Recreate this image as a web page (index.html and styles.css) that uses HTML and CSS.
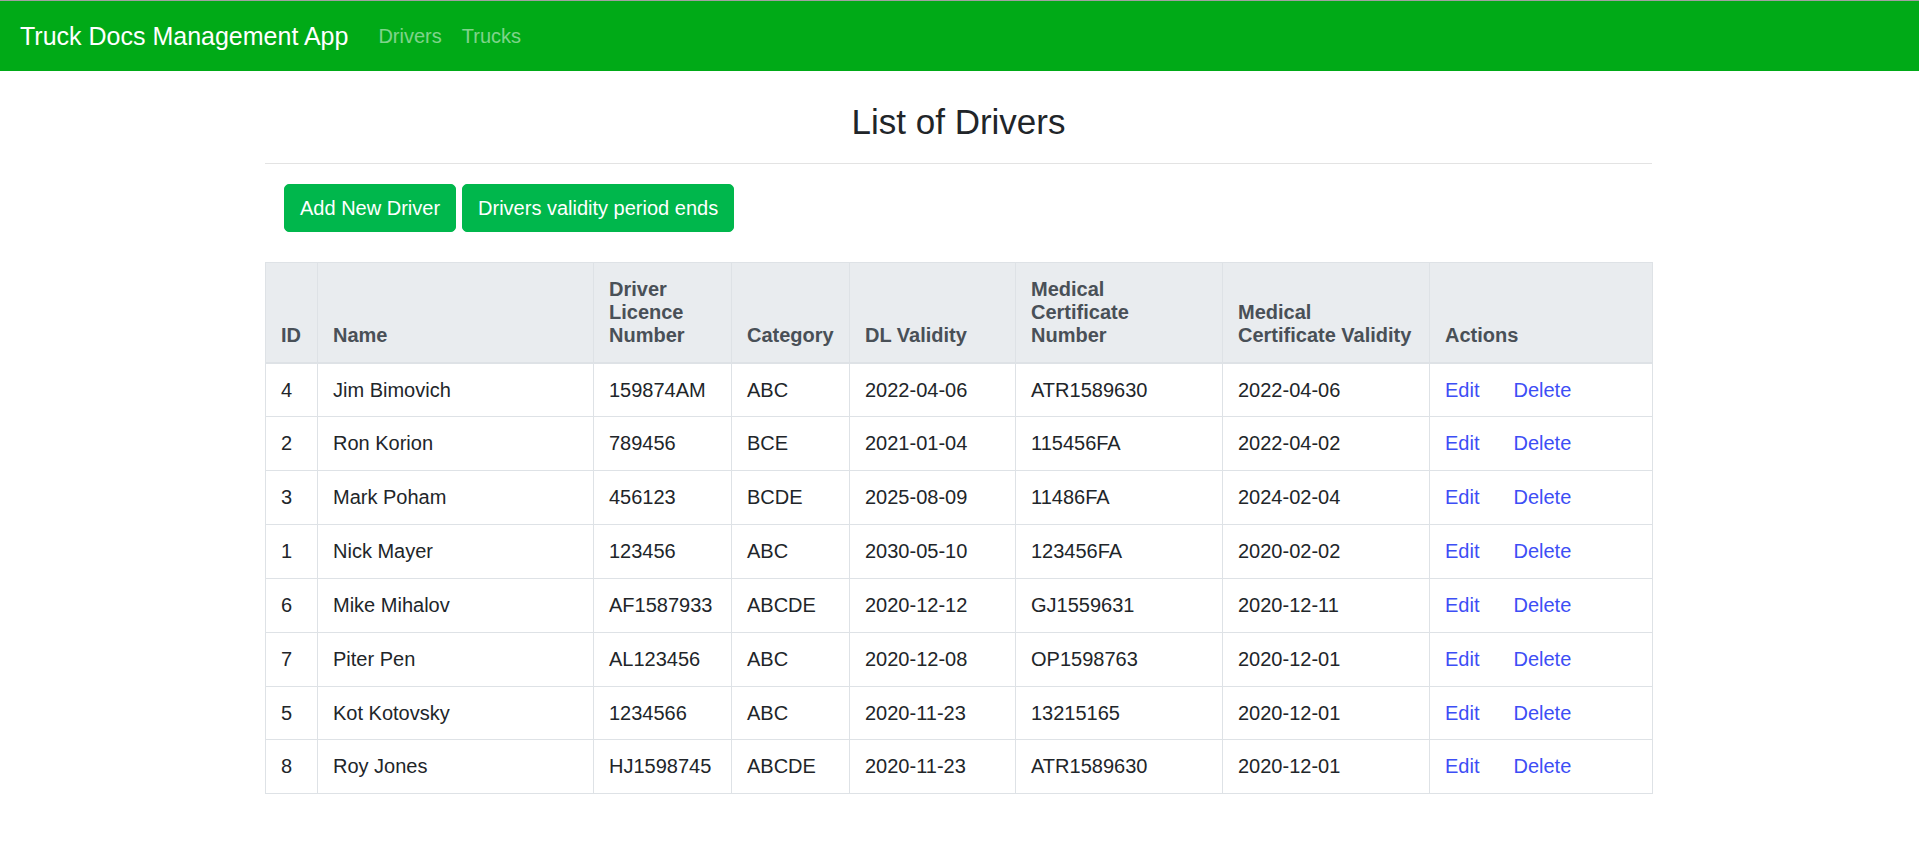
FILE: index.html
```html
<!DOCTYPE html>
<html lang="en">
<head>
<meta charset="utf-8">
<title>Truck Docs Management App</title>
<link rel="stylesheet" href="styles.css">
</head>
<body>
<nav class="navbar">
  <a class="brand" href="#">Truck Docs Management App</a>
  <ul class="nav">
    <li><a class="nav-link" href="#">Drivers</a></li>
    <li><a class="nav-link" href="#">Trucks</a></li>
  </ul>
</nav>
<main class="container">
  <h3 class="title">List of Drivers</h3>
  <hr class="rule">
  <div class="toolbar">
    <a class="btn" href="#">Add New Driver</a>
    <a class="btn" href="#">Drivers validity period ends</a>
  </div>
  <table class="table">
    <colgroup>
      <col class="c-id"><col class="c-name"><col class="c-dln"><col class="c-cat"><col class="c-dl"><col class="c-mcn"><col class="c-mcv"><col class="c-act">
    </colgroup>
    <thead>
      <tr>
        <th>ID</th><th>Name</th><th>Driver<br>Licence<br>Number</th><th>Category</th><th>DL Validity</th><th>Medical<br>Certificate<br>Number</th><th>Medical<br>Certificate Validity</th><th>Actions</th>
      </tr>
    </thead>
    <tbody>
      <tr><td>4</td><td>Jim Bimovich</td><td>159874AM</td><td>ABC</td><td>2022-04-06</td><td>ATR1589630</td><td>2022-04-06</td><td class="actions"><a href="#">Edit</a><a href="#">Delete</a></td></tr>
      <tr><td>2</td><td>Ron Korion</td><td>789456</td><td>BCE</td><td>2021-01-04</td><td>115456FA</td><td>2022-04-02</td><td class="actions"><a href="#">Edit</a><a href="#">Delete</a></td></tr>
      <tr><td>3</td><td>Mark Poham</td><td>456123</td><td>BCDE</td><td>2025-08-09</td><td>11486FA</td><td>2024-02-04</td><td class="actions"><a href="#">Edit</a><a href="#">Delete</a></td></tr>
      <tr><td>1</td><td>Nick Mayer</td><td>123456</td><td>ABC</td><td>2030-05-10</td><td>123456FA</td><td>2020-02-02</td><td class="actions"><a href="#">Edit</a><a href="#">Delete</a></td></tr>
      <tr><td>6</td><td>Mike Mihalov</td><td>AF1587933</td><td>ABCDE</td><td>2020-12-12</td><td>GJ1559631</td><td>2020-12-11</td><td class="actions"><a href="#">Edit</a><a href="#">Delete</a></td></tr>
      <tr><td>7</td><td>Piter Pen</td><td>AL123456</td><td>ABC</td><td>2020-12-08</td><td>OP1598763</td><td>2020-12-01</td><td class="actions"><a href="#">Edit</a><a href="#">Delete</a></td></tr>
      <tr><td>5</td><td>Kot Kotovsky</td><td>1234566</td><td>ABC</td><td>2020-11-23</td><td>13215165</td><td>2020-12-01</td><td class="actions"><a href="#">Edit</a><a href="#">Delete</a></td></tr>
      <tr><td>8</td><td>Roy Jones</td><td>HJ1598745</td><td>ABCDE</td><td>2020-11-23</td><td>ATR1589630</td><td>2020-12-01</td><td class="actions"><a href="#">Edit</a><a href="#">Delete</a></td></tr>
    </tbody>
  </table>
</main>
</body>
</html>
```
FILE: styles.css
```css
* { box-sizing: border-box; }
html, body { margin: 0; padding: 0; }
body {
  font-family: "Liberation Sans", Arial, Helvetica, sans-serif;
  font-size: 20px;
  color: #212529;
  background: #fff;
}
a { text-decoration: none; }

.navbar {
  display: flex;
  align-items: center;
  height: 71px;
  padding: 0 20px;
  background: #00aa17;
  border-top: 1px solid #a0a0a0;
}
.brand {
  font-size: 25px;
  line-height: 37px;
  color: #fff;
  margin-right: 20px;
}
.nav {
  display: flex;
  list-style: none;
  margin: 0;
  padding: 0;
}
.nav-link {
  display: block;
  padding: 0 10px;
  line-height: 30px;
  color: rgba(255, 255, 255, 0.5);
}

.container {
  width: 1389px;
  padding-right: 2px;
  margin: 0 auto;
}
.title {
  margin: 30px 0 0;
  font-size: 35px;
  line-height: 42px;
  font-weight: 400;
  text-align: center;
  color: #212529;
}
.rule {
  margin: 20px 0 0;
  border: 0;
  border-top: 1px solid #e3e3e3;
  height: 0;
}
.toolbar {
  display: flex;
  gap: 6px;
  padding-left: 19px;
  margin-top: 20px;
}
.btn {
  display: inline-block;
  padding: 8px 15px;
  line-height: 30px;
  font-size: 20px;
  color: #fff;
  background: #00b74c;
  border: 1px solid #00b74c;
  border-radius: 5px;
}

.table {
  margin-top: 30px;
  width: 1387px;
  border-collapse: collapse;
  table-layout: fixed;
  border: 1px solid #dee2e6;
}
.c-id { width: 52px; }
.c-name { width: 276px; }
.c-dln { width: 138px; }
.c-cat { width: 118px; }
.c-dl { width: 166px; }
.c-mcn { width: 207px; }
.c-mcv { width: 207px; }
.c-act { width: 223px; }

.table th,
.table td {
  padding: 15px 15px;
  line-height: 22.85px;
  text-align: left;
  border: 1px solid #dee2e6;
}
.table th {
  vertical-align: bottom;
  font-weight: 700;
  color: #495057;
  background: #e9ecef;
  border-bottom: 2px solid #dee2e6;
}
.table td {
  vertical-align: top;
}
.actions a {
  color: #3d4ef5;
}
.actions a + a {
  margin-left: 34px;
}
```
